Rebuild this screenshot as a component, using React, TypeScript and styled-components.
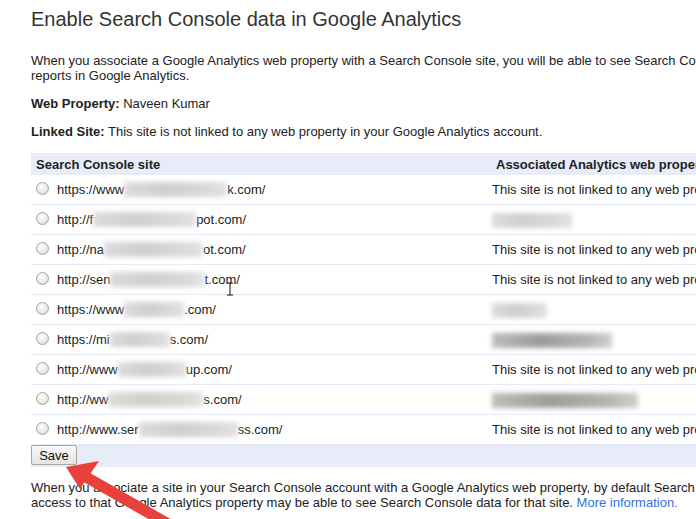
import React from "react";
import styled, { createGlobalStyle } from "styled-components";

const GlobalStyle = createGlobalStyle`
  html, body {
    margin: 0;
    padding: 0;
    background: #fff;
    overflow: hidden;
  }
  body {
    font-family: "Liberation Sans", Arial, sans-serif;
    font-size: 13px;
    color: #222;
  }
`;

const Page = styled.div`
  position: relative;
  width: 1000px;
  height: 519px;
  padding: 7px 0 0 31px;
  box-sizing: border-box;
`;

const Title = styled.h1`
  margin: 0;
  font-size: 20px;
  font-weight: normal;
  line-height: 24px;
  color: #333;
`;

const Para = styled.p<{ $top: number }>`
  margin: ${({ $top }) => $top}px 0 0;
  line-height: 15px;
  white-space: nowrap;
`;

const Label = styled.b`
  font-weight: bold;
`;

const Table = styled.div`
  margin-top: 14px;
  width: 900px;
`;

const HeadRow = styled.div`
  display: grid;
  grid-template-columns: 457px 1fr;
  height: 22px;
  align-items: center;
  background: #e8ebf8;
  font-weight: bold;
`;

const HeadCell = styled.div<{ $pad: number }>`
  padding-left: ${({ $pad }) => $pad}px;
`;

const Row = styled.div`
  display: grid;
  grid-template-columns: 457px 1fr;
  height: 30px;
  align-items: center;
  border-bottom: 1px solid #e6e9f8;
  box-sizing: border-box;
`;

const SiteCell = styled.div`
  display: flex;
  align-items: center;
  padding-left: 5px;
  white-space: nowrap;
`;

const Radio = styled.span`
  width: 11px;
  height: 11px;
  border-radius: 50%;
  border: 1px solid #a4a4a4;
  background: radial-gradient(circle at 40% 35%, #ffffff 0%, #e9e9e9 55%, #cfcfcf 100%);
  margin-right: 8px;
  margin-top: -3px;
  flex: none;
`;

const PropCell = styled.div`
  padding-left: 4px;
  white-space: nowrap;
`;

const Blur = styled.span<{ $w: number; $dark?: boolean }>`
  display: inline-block;
  width: ${({ $w }) => $w}px;
  height: 15px;
  vertical-align: middle;
  background: ${({ $dark }) =>
    $dark
      ? "linear-gradient(90deg, #bdbdbd, #9c9c9c 40%, #b5b5b5 80%, #d0d0d0)"
      : "linear-gradient(90deg, #dcdcdc, #cfcfcf 40%, #d8d8d8 75%, #e2e2e2)"};
  filter: blur(2.5px);
`;

const Footer = styled.div`
  height: 22px;
  background: #e8ebf8;
  display: flex;
  align-items: flex-start;
`;

const SaveButton = styled.button`
  height: 20px;
  width: 46px;
  padding: 0;
  font-family: "Liberation Sans", Arial, sans-serif;
  font-size: 13px;
  color: #111;
  border: 1px solid #a6a6a6;
  border-radius: 2px;
  background: linear-gradient(#f8f8f8, #e4e4e4);
`;

const Link = styled.a`
  color: #3a6fdc;
  text-decoration: none;
`;

const Overlay = styled.svg`
  position: absolute;
  left: 0;
  top: 0;
  pointer-events: none;
`;

type Site = {
  pre: string;
  blur: number;
  post: string;
  prop: { text?: string; blur?: number; dark?: boolean };
};

const NOT_LINKED = "This site is not linked to any web property in your Google Analytics account.";

const sites: Site[] = [
  { pre: "https://www", blur: 103, post: "k.com/", prop: { text: NOT_LINKED } },
  { pre: "http://f", blur: 103, post: "pot.com/", prop: { blur: 80 } },
  { pre: "http://na", blur: 99, post: "ot.com/", prop: { text: NOT_LINKED } },
  { pre: "http://sen", blur: 94, post: "t.com/", prop: { text: NOT_LINKED } },
  { pre: "https://www", blur: 60, post: ".com/", prop: { blur: 55 } },
  { pre: "https://mi", blur: 60, post: "s.com/", prop: { blur: 120, dark: true } },
  { pre: "http://www", blur: 68, post: "up.com/", prop: { text: NOT_LINKED } },
  { pre: "http://ww", blur: 95, post: "s.com/", prop: { blur: 146, dark: true } },
  { pre: "http://www.ser", blur: 99, post: "ss.com/", prop: { text: NOT_LINKED } },
];

export default function App() {
  return (
    <Page>
      <GlobalStyle />
      <Title>Enable Search Console data in Google Analytics</Title>
      <Para $top={22}>
        When you associate a Google Analytics web property with a Search Console site, you will be able to see Search Console data in your
        <br />
        reports in Google Analytics.
      </Para>
      <Para $top={13}>
        <Label>Web Property:</Label> Naveen Kumar
      </Para>
      <Para $top={13}>
        <Label>Linked Site:</Label> This site is not linked to any web property in your Google Analytics account.
      </Para>
      <Table>
        <HeadRow>
          <HeadCell $pad={5}>Search Console site</HeadCell>
          <HeadCell $pad={8}>Associated Analytics web property</HeadCell>
        </HeadRow>
        {sites.map((s, i) => (
          <Row key={i}>
            <SiteCell>
              <Radio />
              {s.pre}
              <Blur $w={s.blur} />
              {s.post}
            </SiteCell>
            <PropCell>
              {s.prop.text ? s.prop.text : <Blur $w={s.prop.blur ?? 60} $dark={s.prop.dark} />}
            </PropCell>
          </Row>
        ))}
        <Footer>
          <SaveButton>Save</SaveButton>
        </Footer>
      </Table>
      <Para $top={13}>
        When you associate a site in your Search Console account with a Google Analytics web property, by default Search Console data is enabled for
        <br />
        access to that Google Analytics property may be able to see Search Console data for that site. <Link href="#">More information.</Link>
      </Para>
      <Overlay width="696" height="519" viewBox="0 0 696 519">
        <line x1="86" y1="477" x2="170" y2="525" stroke="#e8413c" strokeWidth="11" />
        <polygon points="66,467 99,461 80,489" fill="#e8413c" />
        <path d="M227 283 H233 M230 283 V295 M227 295 H233" stroke="#111" strokeWidth="1" fill="none" />
      </Overlay>
    </Page>
  );
}
